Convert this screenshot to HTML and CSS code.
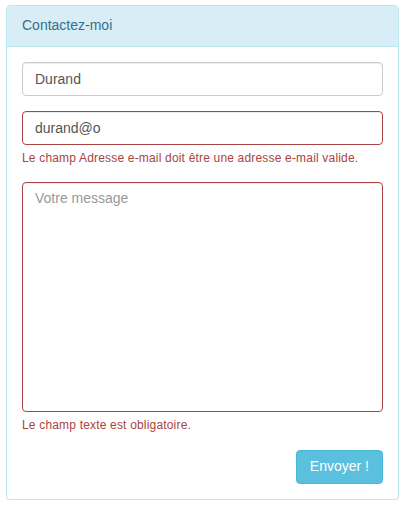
FILE: index.html
```html
<!DOCTYPE html>
<html lang="fr">
<head>
<meta charset="utf-8">
<title>Contactez-moi</title>
<link rel="stylesheet" href="styles.css">
</head>
<body>
<div class="panel">
  <div class="panel-heading">Contactez-moi</div>
  <form class="panel-body">
    <div class="form-group">
      <input class="form-control" type="text" value="Durand">
    </div>
    <div class="form-group has-error">
      <input class="form-control" type="text" value="durand@o">
      <p class="help-block">Le champ Adresse e-mail doit être une adresse e-mail valide.</p>
    </div>
    <div class="form-group form-group-last has-error">
      <textarea class="form-control message" placeholder="Votre message"></textarea>
      <p class="help-block">Le champ texte est obligatoire.</p>
    </div>
    <div class="actions">
      <button class="btn" type="button">Envoyer !</button>
    </div>
  </form>
</div>
</body>
</html>
```
FILE: styles.css
```css
* { box-sizing: border-box; }
body {
  margin: 0;
  font-family: "Liberation Sans", Arial, sans-serif;
  font-size: 14px;
  line-height: 1.42857;
  color: #333;
  background: #fff;
}
.panel {
  margin: 5px 0 0 6px;
  width: 393px;
  border: 1px solid #bce8f1;
  border-radius: 4px;
  box-shadow: 0 1px 1px rgba(0,0,0,.05);
  background: #fff;
}
.panel-heading {
  padding: 10px 15px;
  background: #d9edf7;
  color: #31708f;
  border-bottom: 1px solid #bce8f1;
  border-radius: 3px 3px 0 0;
}
.panel-body {
  padding: 15px;
  margin: 0;
}
.form-group { margin-bottom: 15px; }
.form-group-last { margin-bottom: 16px; }
.form-control {
  display: block;
  width: 100%;
  height: 34px;
  padding: 6px 12px;
  font-family: inherit;
  font-size: 14px;
  line-height: 1.42857;
  color: #555;
  background: #fff;
  border: 1px solid #ccc;
  border-radius: 4px;
  box-shadow: inset 0 1px 1px rgba(0,0,0,.075);
  margin: 0;
}
.form-control::placeholder { color: #999; opacity: 1; }
.message { height: 230px; resize: none; }
.has-error .form-control { border-color: #a94442; }
.help-block {
  margin: 5px 0 0;
  font-size: 12px;
  line-height: 17px;
  letter-spacing: 0.18px;
  color: #a94442;
}
.actions {
  display: flex;
  justify-content: flex-end;
}
.btn {
  height: 34px;
  padding: 6px 13px;
  font-family: inherit;
  font-size: 14px;
  line-height: 1.42857;
  color: #fff;
  background: #5bc0de;
  border: 1px solid #46b8da;
  border-radius: 4px;
  cursor: pointer;
}
```
